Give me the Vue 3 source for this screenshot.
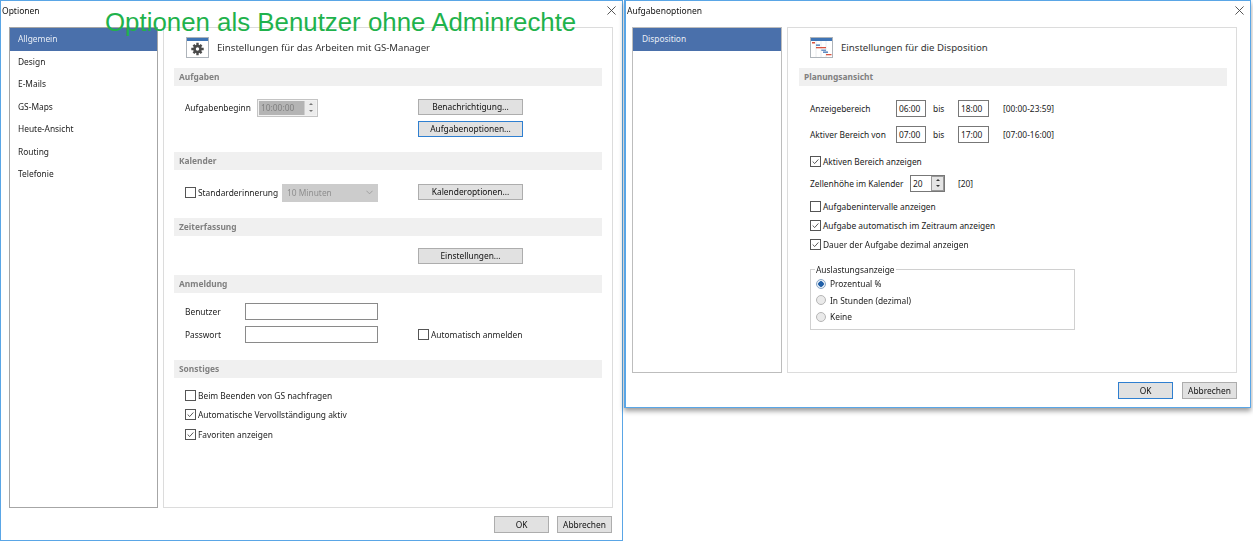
<script setup>
const menu = ['Allgemein', 'Design', 'E-Mails', 'GS-Maps', 'Heute-Ansicht', 'Routing', 'Telefonie']
const others = [
  { label: 'Beim Beenden von GS nachfragen', on: false },
  { label: 'Automatische Vervollständigung aktiv', on: true },
  { label: 'Favoriten anzeigen', on: true }
]
const radios = ['Prozentual %', 'In Stunden (dezimal)', 'Keine']
</script>

<template>
  <div class="desktop">
    <section class="win win-a">
      <header class="title"><span>Optionen</span>
        <svg class="close" viewBox="0 0 10 10"><path d="M.5.5l9 9M9.500.5l-9 9" /></svg>
      </header>
      <div class="main main-a">
        <nav class="side">
          <div v-for="(m, i) in menu" :key="m" class="item" :class="{ sel: i === 0 }">{{ m }}</div>
        </nav>
        <div class="panel">
          <div class="head">
            <svg class="logo" viewBox="0 0 23 21">
              <rect x=".5" y=".5" width="22" height="20" fill="#fff" stroke="#aeb4ba" />
              <rect x="1" y="1" width="21" height="3" fill="#3f74b5" />
              <g fill="#4a4a4a">
                <circle cx="11.500" cy="12" r="4.300" />
                <path d="M10.300 5.800h2.400v3h-2.400zM10.300 15.200h2.400v3h-2.400zM5.300 10.800h3v2.400h-3zM14.700 10.800h3v2.400h-3z" />
                <path d="M6.600 8.800l1.700-1.700 2 2-1.700 1.700zM14.700 16.900l1.700-1.700-2-2-1.700 1.700zM6.600 15.200l1.700 1.700 2-2-1.700-1.700zM14.700 7.100l1.700 1.700-2 2-1.700-1.700z" />
              </g>
              <circle cx="11.500" cy="12" r="1.700" fill="#fff" />
            </svg>
            <span>Einstellungen für das Arbeiten mit GS-Manager</span>
          </div>

          <h3 class="bar">Aufgaben</h3>
          <div class="sec sec-tasks">
            <div class="line">
              <span class="lbl lead">Aufgabenbeginn</span>
              <div class="time">
                <span class="time-val">10:00:00</span>
                <span class="spin off"><i class="up"></i><i class="down"></i></span>
              </div>
            </div>
            <div class="btns">
              <button class="btn wide">Benachrichtigung...</button>
              <button class="btn wide focus">Aufgabenoptionen...</button>
            </div>
          </div>

          <h3 class="bar">Kalender</h3>
          <div class="sec sec-cal">
            <div class="line">
              <span class="check"></span><span class="chk-text std">Standarderinnerung</span>
              <div class="combo"><span>10 Minuten</span>
                <svg viewBox="0 0 8 5"><path d="M.5.500L4 4l3.500-3.500" /></svg>
              </div>
            </div>
            <button class="btn wide">Kalenderoptionen...</button>
          </div>

          <h3 class="bar">Zeiterfassung</h3>
          <div class="sec sec-time">
            <span></span>
            <button class="btn wide">Einstellungen...</button>
          </div>

          <h3 class="bar">Anmeldung</h3>
          <div class="sec sec-login">
            <span class="lbl">Benutzer</span><span class="field"></span><span></span>
            <span class="lbl">Passwort</span><span class="field"></span>
            <div class="line auto"><span class="check"></span><span class="chk-text">Automatisch anmelden</span></div>
          </div>

          <h3 class="bar">Sonstiges</h3>
          <div class="sec-other">
            <div v-for="o in others" :key="o.label" class="line">
              <span class="check" :class="{ on: o.on }">
                <svg v-if="o.on" viewBox="0 0 11 11"><path d="M2 5.500l2.500 2.500 4.500-5" /></svg>
              </span>
              <span class="chk-text">{{ o.label }}</span>
            </div>
          </div>
        </div>
      </div>
      <footer class="foot">
        <button class="btn act">OK</button>
        <button class="btn act">Abbrechen</button>
      </footer>
    </section>

    <div class="banner">Optionen als Benutzer ohne Adminrechte</div>

    <section class="win win-b">
      <header class="title"><span>Aufgabenoptionen</span>
        <svg class="close" viewBox="0 0 10 10"><path d="M.5.5l9 9M9.500.5l-9 9" /></svg>
      </header>
      <div class="main main-b">
        <nav class="side">
          <div class="item sel">Disposition</div>
        </nav>
        <div class="panel">
          <div class="head head-b">
            <svg class="logo" viewBox="0 0 23 21">
              <rect x=".5" y=".5" width="22" height="20" fill="#fff" stroke="#aeb4ba" />
              <path d="M6 4v16M11 4v16M16 4v16" stroke="#e4e7ea" stroke-width=".8" />
              <rect x="1" y="1" width="21" height="3" fill="#3f74b5" />
              <rect x="2" y="5" width="3" height="1.500" fill="#d9533f" />
              <rect x="6" y="7.500" width="4" height="1.300" fill="#3f74b5" />
              <rect x="6" y="10" width="10" height="1.300" fill="#d9533f" />
              <rect x="11.300" y="12.500" width="4.700" height="1.500" fill="#6f97c7" />
              <rect x="13" y="14.500" width="5" height="1.300" fill="#3f74b5" />
              <rect x="16" y="17" width="5.500" height="1.300" fill="#d9533f" />
            </svg>
            <span>Einstellungen für die Disposition</span>
          </div>
          <h3 class="bar">Planungsansicht</h3>
          <div class="plan">
            <div class="range r1">
              <span class="lbl rl">Anzeigebereich</span>
              <span class="tbox">06:00</span><span class="lbl bis">bis</span>
              <span class="tbox t2">18:00</span><span class="lbl hint">[00:00-23:59]</span>
            </div>
            <div class="range r2">
              <span class="lbl rl">Aktiver Bereich von</span>
              <span class="tbox">07:00</span><span class="lbl bis">bis</span>
              <span class="tbox t2">17:00</span><span class="lbl hint">[07:00-16:00]</span>
            </div>
            <div class="line pl1">
              <span class="check on"><svg viewBox="0 0 11 11"><path d="M2 5.500l2.500 2.500 4.500-5" /></svg></span>
              <span class="chk-text">Aktiven Bereich anzeigen</span>
            </div>
            <div class="line pl2">
              <span class="lbl cell">Zellenhöhe im Kalender</span>
              <div class="num"><span>20</span>
                <span class="spin"><i class="up"></i><i class="down"></i></span>
              </div>
              <span class="lbl cellhint">[20]</span>
            </div>
            <div class="line pl3">
              <span class="check"></span><span class="chk-text">Aufgabenintervalle anzeigen</span>
            </div>
            <div class="line pl4">
              <span class="check on"><svg viewBox="0 0 11 11"><path d="M2 5.500l2.500 2.500 4.500-5" /></svg></span>
              <span class="chk-text">Aufgabe automatisch im Zeitraum anzeigen</span>
            </div>
            <div class="line pl4">
              <span class="check on"><svg viewBox="0 0 11 11"><path d="M2 5.500l2.500 2.500 4.500-5" /></svg></span>
              <span class="chk-text">Dauer der Aufgabe dezimal anzeigen</span>
            </div>
            <fieldset class="group">
              <legend>Auslastungsanzeige</legend>
              <div v-for="(r, i) in radios" :key="r" class="radio-row">
                <span class="radio" :class="{ on: i === 0 }"></span>
                <span>{{ r }}</span>
              </div>
            </fieldset>
          </div>
        </div>
      </div>
      <footer class="foot foot-b">
        <button class="btn act focus">OK</button>
        <button class="btn act">Abbrechen</button>
      </footer>
    </section>
  </div>
</template>

<style>
html, body { margin: 0; background: #fff; }
</style>

<style scoped>
.desktop {
  position: relative;
  width: 1253px;
  height: 541px;
  overflow: hidden;
  background: #fff;
  font-family: "Noto Sans", sans-serif;
  font-size: 8.400px;
  color: #222;
}
.win {
  position: absolute;
  top: 0;
  box-sizing: border-box;
  display: flex;
  flex-direction: column;
  background: #fff;
  border: 1px solid #5aa6e6;
  border-top-width: 1.500px;
  filter: blur(.3px);
}
.win-a { left: 0; width: 623px; height: 541px; }
.win-b {
  left: 624px;
  width: 627px;
  height: 408px;
  border-left-width: 2px;
  box-shadow: 0 3px 5px rgba(0, 0, 0, .4);
}
.title {
  height: 18px;
  flex: none;
  display: flex;
  align-items: center;
  justify-content: space-between;
  padding: 0 6px 0 1px;
  font-size: 8.500px;
  color: #111;
}
.close { width: 9px; height: 9px; }
.close path { fill: none; stroke: #444; stroke-width: 1; }
.main {
  display: flex;
  margin-top: 7.500px;
  flex: none;
}
.main-a { height: 481px; padding-left: 8px; gap: 5px; }
.main-b { height: 346px; padding-left: 6px; gap: 5px; }
.side {
  box-sizing: border-box;
  width: 149px;
  border: 1px solid #a6a6a6;
  background: #fff;
}
.main-b .side { width: 150px; border-color: #bdbdbd; }
.item {
  height: 22.500px;
  line-height: 22.500px;
  padding-left: 8px;
  color: #222;
}
.main-b .item { padding-left: 9px; }
.item.sel {
  height: 23px;
  background: #4a70ab;
  color: #e8eef6;
}
.panel {
  box-sizing: border-box;
  width: 450px;
  border: 1px solid #dcdcdc;
  padding: 0 10px;
  background: #fff;
}
.main-b .panel { padding: 0 9px 0 11px; }
.head {
  height: 40px;
  padding-left: 12px;
  display: flex;
  align-items: center;
  gap: 8px;
  font-size: 9.650px;
  color: #333;
}
.head-b { padding-left: 11px; gap: 8px; }
.logo { width: 23px; height: 21px; flex: none; }
.bar {
  margin: 0;
  height: 18px;
  line-height: 18px;
  padding-left: 5px;
  background: #f0f0f0;
  font-size: 8.400px;
  font-weight: 700;
  color: #808080;
}
.sec {
  display: grid;
  padding-left: 11px;
  grid-template-columns: 233px 105px;
}
.sec-tasks { height: 66px; padding-top: 13px; box-sizing: border-box; }
.sec-cal { height: 48px; padding-top: 14px; box-sizing: border-box; }
.sec-time { height: 39px; padding-top: 12px; box-sizing: border-box; }
.sec-login {
  height: 67px;
  box-sizing: border-box;
  padding-top: 10px;
  grid-template-columns: 60px 133px 1fr;
  grid-auto-rows: 17px;
  row-gap: 6px;
  align-items: center;
}
.line { display: flex; align-items: center; }
.sec .line { align-self: start; }
.sec .line.auto { align-self: center; }
.btns { display: flex; flex-direction: column; gap: 5.500px; }
.lbl { color: #222; white-space: nowrap; }
.lead { width: 72px; flex: none; }
.std { width: 84px; flex: none; }
.chk-text { margin-left: 2px; white-space: nowrap; color: #222; }
.btn {
  box-sizing: border-box;
  height: 16.500px;
  padding: 0;
  background: #e1e1e1;
  border: 1px solid #adadad;
  font: inherit;
  color: #111;
}
.btn.wide { width: 105px; }
.btn.focus { border: 1.500px solid #2f7fd0; }
.time {
  width: 61px;
  height: 18px;
  box-sizing: border-box;
  padding: 1px;
  border: 1px solid #c4c4c4;
  background: #f2f2f2;
  display: flex;
}
.time-val {
  flex: 1;
  background: #b4b4b4;
  color: #808080;
  padding-left: 2px;
  line-height: 14px;
}
.spin {
  width: 11px;
  display: flex;
  flex-direction: column;
  align-items: center;
  justify-content: space-around;
  background: #ececec;
  border-left: 1px solid #cfcfcf;
}
.spin i { width: 0; height: 0; border: 2px solid transparent; }
.spin .up { border-top: 0; border-bottom: 2.500px solid #333; }
.spin .down { border-bottom: 0; border-top: 2.500px solid #333; }
.spin.off .up { border-bottom-color: #777; }
.spin.off .down { border-top-color: #777; }
.check {
  box-sizing: border-box;
  flex: none;
  width: 11px;
  height: 11px;
  border: 1px solid #555;
  background: #fff;
  display: block;
}
.check svg { display: block; width: 9px; height: 9px; }
.check path { fill: none; stroke: #333; stroke-width: 1; }
.combo {
  box-sizing: border-box;
  width: 96px;
  height: 18px;
  background: #cccccc;
  color: #8e8e8e;
  padding: 0 5px;
  display: flex;
  align-items: center;
  justify-content: space-between;
}
.combo svg { width: 7px; height: 5px; }
.combo path { fill: none; stroke: #9a9a9a; }
.field {
  box-sizing: border-box;
  height: 17px;
  border: 1px solid #8a8a8a;
  background: #fff;
}
.auto { margin-left: 40px; }
.sec-other {
  padding: 11px 0 0 11px;
  display: flex;
  flex-direction: column;
  gap: 6px;
}
.sec-other .line { height: 13.500px; }
.foot {
  flex: none;
  display: flex;
  justify-content: flex-end;
  gap: 8px;
  padding: 8px 10px 0 0;
}
.foot-b { gap: 9px; padding: 9px 13px 0 0; }
.act { width: 55px; height: 17px; }
.plan { padding-left: 11px; }
.range {
  display: flex;
  align-items: center;
  height: 17px;
}
.r1 { margin-top: 14px; }
.r2 { margin-top: 9px; }
.rl { width: 86px; }
.tbox {
  box-sizing: border-box;
  width: 30px;
  height: 17px;
  line-height: 15px;
  border: 1px solid #777;
  padding-left: 2px;
  color: #222;
}
.bis { margin-left: 7px; width: 25px; }
.t2 { width: 31px; }
.hint { margin-left: 14px; }
.pl1 { margin-top: 12px; height: 13px; }
.pl2 { margin-top: 7px; height: 17px; }
.pl3 { margin-top: 8px; height: 13px; }
.pl4 { margin-top: 6px; height: 13px; }
.cell { width: 100px; }
.num {
  box-sizing: border-box;
  width: 35px;
  height: 17px;
  border: 1px solid #777;
  padding-left: 2px;
  display: flex;
  justify-content: space-between;
  line-height: 15px;
  margin-right: 13px;
}
.num .spin { background: #e4e4e4; border: 1px solid #999; }
.group {
  margin: 13px 0 0;
  box-sizing: border-box;
  width: 265px;
  height: 66px;
  border: 1px solid #d0d0d0;
  padding: 0 0 0 5px;
  min-inline-size: 0;
}
.group legend { padding: 0 1px; margin-left: -1px; line-height: 12px; color: #222; }
.radio-row { display: flex; align-items: center; gap: 4px; height: 16.500px; color: #222; }
.radio {
  box-sizing: border-box;
  flex: none;
  width: 10px;
  height: 10px;
  border-radius: 50%;
  border: 1px solid #b5b5b5;
  background: #eaeaea;
}
.radio.on {
  background: radial-gradient(circle, #1f5fa8 0 2.500px, #e6edf5 3px);
  border-color: #8aa6c4;
}
.banner {
  position: absolute;
  left: 105px;
  top: 8px;
  font-family: "Liberation Sans", sans-serif;
  font-size: 25.850px;
  line-height: 28px;
  color: #1fb24c;
  white-space: nowrap;
}
</style>
